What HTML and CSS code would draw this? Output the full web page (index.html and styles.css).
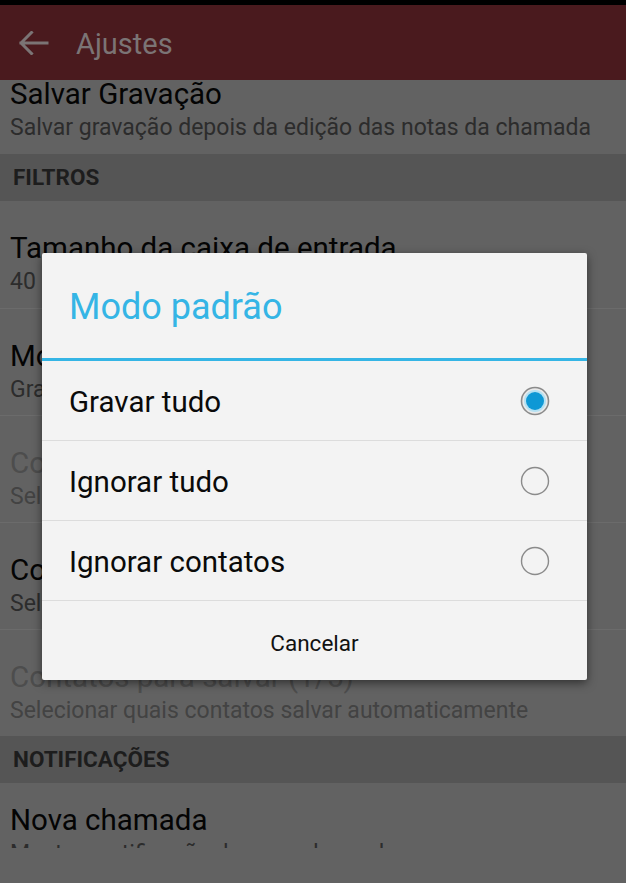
FILE: index.html
```html
<!DOCTYPE html>
<html lang="pt">
<head>
<meta charset="utf-8">
<title>Ajustes</title>
<link rel="stylesheet" href="styles.css">
</head>
<body>
<div class="screen">
  <div class="statusbar"></div>
  <header class="appbar">
    <svg class="back" width="30" height="24" viewBox="0 0 30 24" aria-hidden="true">
      <path d="M2 12 H28 M12.5 1.5 L2 12 L12.5 22.5" fill="none" stroke="#7b7475" stroke-width="3" stroke-linecap="square" stroke-linejoin="miter"/>
    </svg>
    <span class="apptitle">Ajustes</span>
  </header>
  <main class="list">
    <div class="pref pref-scrolled">
      <div class="pref-title">Salvar Gravação</div>
      <div class="pref-sub">Salvar gravação depois da edição das notas da chamada</div>
    </div>
    <div class="section">FILTROS</div>
    <div class="pref">
      <div class="pref-title">Tamanho da caixa de entrada</div>
      <div class="pref-sub">40 gravações</div>
    </div>
    <div class="pref divided">
      <div class="pref-title">Modo padrão</div>
      <div class="pref-sub">Gravar tudo</div>
    </div>
    <div class="pref divided disabled">
      <div class="pref-title">Contatos para gravar</div>
      <div class="pref-sub">Selecionar quais contatos gravar</div>
    </div>
    <div class="pref divided">
      <div class="pref-title">Contatos para ignorar</div>
      <div class="pref-sub">Selecionar quais contatos ignorar</div>
    </div>
    <div class="pref divided disabled">
      <div class="pref-title">Contatos para salvar (1/5)</div>
      <div class="pref-sub">Selecionar quais contatos salvar automaticamente</div>
    </div>
    <div class="section">NOTIFICAÇÕES</div>
    <div class="pref pref-compact">
      <div class="pref-title">Nova chamada</div>
      <div class="pref-sub">Mostrar notificação de nova chamada</div>
    </div>
  </main>
  <div class="navstrip"></div>

  <div class="dialog" role="dialog">
    <div class="dlg-title">Modo padrão</div>
    <div class="dlg-rule"></div>
    <div class="dlg-item">
      <span>Gravar tudo</span>
      <svg class="radio" width="30" height="30" viewBox="0 0 30 30" aria-hidden="true">
        <circle cx="15" cy="15" r="13.5" fill="#e9e9e9" stroke="#8b8b8b" stroke-width="1.6"/>
        <circle cx="15" cy="15" r="11" fill="#b4e1f3"/>
        <circle cx="15" cy="15" r="9" fill="#0e98d5"/>
      </svg>
    </div>
    <div class="dlg-item">
      <span>Ignorar tudo</span>
      <svg class="radio" width="30" height="30" viewBox="0 0 30 30" aria-hidden="true">
        <circle cx="15" cy="15" r="13.5" fill="none" stroke="#8b8b8b" stroke-width="1.4"/>
      </svg>
    </div>
    <div class="dlg-item">
      <span>Ignorar contatos</span>
      <svg class="radio" width="30" height="30" viewBox="0 0 30 30" aria-hidden="true">
        <circle cx="15" cy="15" r="13.5" fill="none" stroke="#8b8b8b" stroke-width="1.4"/>
      </svg>
    </div>
    <div class="dlg-button">Cancelar</div>
  </div>
</div>
</body>
</html>
```
FILE: styles.css
```css
html, body {
  margin: 0;
  padding: 0;
}
body {
  background: #626262;
  font-family: Roboto, "Noto Sans", "Liberation Sans", sans-serif;
}
.screen {
  position: relative;
  width: 626px;
  height: 883px;
  overflow: hidden;
  background: #626262;
}
.statusbar {
  height: 5px;
  background: #000;
}
.appbar {
  position: relative;
  z-index: 2;
  height: 75px;
  background: #4a1a1e;
  display: flex;
  align-items: center;
  padding-left: 19px;
  box-sizing: border-box;
}
.back {
  display: block;
  margin-top: 1px;
}
.apptitle {
  margin-left: 27px;
  font-size: 29px;
  color: #7b7475;
  margin-top: 2px;
}
.list {
  height: 768px;
  overflow: hidden;
}
.pref {
  height: 107px;
  box-sizing: border-box;
  padding: 31px 10px 0;
}
.pref-scrolled {
  margin-top: -33px;
}
.pref-compact {
  padding-top: 21px;
}
.divided {
  border-top: 1px solid #6b6b6b;
}
.pref-title {
  font-size: 29.5px;
  line-height: 32px;
  color: #040404;
  white-space: nowrap;
}
.pref-sub {
  margin-top: 5px;
  font-size: 23px;
  line-height: 26px;
  color: #2c2c2c;
  white-space: nowrap;
}
.disabled .pref-title {
  color: #4d4d4d;
}
.disabled .pref-sub {
  color: #434343;
}
.section {
  height: 47px;
  line-height: 47px;
  background: #555555;
  padding-left: 13px;
  font-size: 22.5px;
  font-weight: 700;
  color: #1d1d1d;
}
.navstrip {
  height: 35px;
  background: #626262;
}
.dialog {
  position: absolute;
  left: 42px;
  top: 253px;
  width: 545px;
  height: 427px;
  background: #f3f3f3;
  border-radius: 2px;
  box-shadow: 0 3px 10px rgba(0, 0, 0, 0.5);
  display: flex;
  flex-direction: column;
}
.dlg-title {
  height: 105px;
  box-sizing: border-box;
  padding: 34px 0 0 27px;
  font-size: 36px;
  line-height: 40px;
  color: #35b5e5;
}
.dlg-rule {
  height: 3px;
  background: #35b5e5;
}
.dlg-item {
  height: 80px;
  box-sizing: border-box;
  border-bottom: 1px solid #dcdcdc;
  display: flex;
  align-items: center;
  justify-content: space-between;
  padding: 3px 37px 0 27px;
  font-size: 29.5px;
  color: #0a0a0a;
}
.dlg-item .radio {
  margin-top: -3px;
  display: block;
}
.dlg-button {
  flex: 1;
  display: flex;
  align-items: center;
  justify-content: center;
  padding-top: 5px;
  font-size: 22.5px;
  color: #111;
}
```
